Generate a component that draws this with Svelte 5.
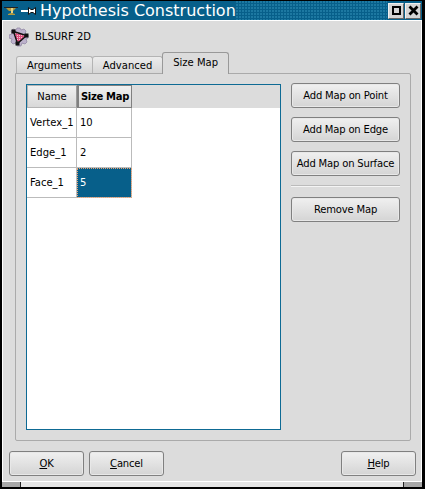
<script>
  const tabs = ['Arguments', 'Advanced', 'Size Map'];
  const rows = [
    { name: 'Vertex_1', size: '10' },
    { name: 'Edge_1', size: '2' },
    { name: 'Face_1', size: '5', current: true }
  ];
  const actions = ['Add Map on Point', 'Add Map on Edge', 'Add Map on Surface'];
</script>

<div class="window">
  <div class="titlebar">
    <div class="wm-left">
      <svg width="15" height="10" viewBox="0 0 15 10">
        <path d="M0 1h14v1H0z" fill="#222" />
        <path d="M2 2h10L9 5H8v2l3 1v1H4V8l3-1V5H5z" fill="#b59a3c" />
        <path d="M7 2h2v5H7z" fill="#e8d488" />
      </svg>
      <svg width="16" height="10" viewBox="0 0 16 10">
        <path d="M0 5h7" stroke="#fff" stroke-width="2" />
        <path d="M7.500 1.500v7l2.500-2h2l2.500 2v-7l-2.500 2h-2z" fill="#fff" stroke="#111" />
      </svg>
    </div>
    <div class="title">Hypothesis Construction</div>
    <div class="grip"></div>
    <div class="wm-btn"><span class="maxi"></span></div>
    <div class="wm-btn">
      <svg width="11" height="11" viewBox="0 0 11 11">
        <path d="M1.500 1.500l8 8M9.500 1.500l-8 8" stroke="#000" stroke-width="2.800" />
      </svg>
    </div>
  </div>

  <div class="body">
    <div class="hypo">
      <svg width="20" height="20" viewBox="0 0 20 20">
        <defs>
          <pattern id="hatch" width="2" height="2" patternUnits="userSpaceOnUse">
            <rect width="2" height="2" fill="#e0507f" />
            <rect width="1" height="1" fill="#f4c0d0" />
          </pattern>
        </defs>
        <path d="M8 1h3l1 2 3-1 2 2-1 3 3 1v3l-2 1 1 3-2 2-3-1-1 3H8l-1-3-3 1-2-2 1-3-3-1V8l3-1-1-3 2-2 3 1z" fill="#bdb2cc" stroke="#8d82a0" stroke-width=".7" />
        <path d="M4.500 4.500l13 4-9 8z" fill="url(#hatch)" stroke="#111" stroke-width="1.400" />
        <rect x="2.500" y="2.500" width="4" height="4" fill="#111" />
        <rect x="15.500" y="6.500" width="4" height="4" fill="#111" />
        <rect x="6.500" y="14.500" width="4" height="4" fill="#111" />
      </svg>
      <span>BLSURF 2D</span>
    </div>

    <div class="tabbar">
      {#each tabs as tab, i}
        <div class="tab" class:active={i === 2}>{tab}</div>
      {/each}
    </div>

    <div class="pane">
      <div class="table">
        <div class="head">
          <div class="hcell name">Name</div>
          <div class="hcell size cur">Size Map</div>
        </div>
        {#each rows as row}
          <div class="row">
            <div class="cell name">{row.name}</div>
            <div class="cell size" class:selected={row.current}>{row.size}</div>
          </div>
        {/each}
      </div>

      <div class="side">
        {#each actions as action}
          <button>{action}</button>
        {/each}
        <div class="sep"></div>
        <button>Remove Map</button>
      </div>
    </div>

    <div class="footer">
      <button class="wide"><u>O</u>K</button>
      <button class="wide"><u>C</u>ancel</button>
      <div class="spacer"></div>
      <button class="wide"><u>H</u>elp</button>
    </div>
  </div>

  <div class="resize">
    <div class="corner"></div>
    <div class="mid"></div>
    <div class="corner"></div>
  </div>
</div>

<style>
  :global(body) {
    background: #000;
  }

  .window {
    width: 425px;
    height: 489px;
    box-sizing: border-box;
    display: flex;
    flex-direction: column;
    background: #dcdcdc;
    border: solid #000;
    border-width: 1px 3px 2px 2px;
    font-family: "DejaVu Sans", sans-serif;
    font-size: 10px;
    color: #000;
    overflow: hidden;
  }

  .titlebar {
    height: 19px;
    flex: none;
    display: flex;
    align-items: center;
    background-color: #075f8a;
  }

  .wm-left {
    width: 38px;
    flex: none;
    padding-left: 2px;
    box-sizing: border-box;
    display: flex;
    align-items: center;
    gap: 2px;
  }

  .title {
    color: #fff;
    font-size: 16px;
    line-height: 19px;
    white-space: nowrap;
  }

  .grip {
    flex: 1;
    align-self: stretch;
    background-image: radial-gradient(circle at 1px 1px, #1f7aa3 .7px, transparent .8px);
    background-size: 3px 3px;
  }

  .wm-btn {
    width: 16px;
    height: 16px;
    margin-left: 1px;
    background: #d4d4d4;
    border: 1px solid;
    border-color: #f0f0f0 #666 #666 #f0f0f0;
    box-sizing: border-box;
    display: flex;
    align-items: center;
    justify-content: center;
  }

  .wm-btn:last-child {
    margin-right: 1px;
  }

  .maxi {
    width: 5px;
    height: 5px;
    border: 2px solid #000;
  }

  .body {
    flex: 1;
    display: flex;
    flex-direction: column;
    border-top: 1px solid #fff;
    border-left: 1px solid #fff;
    border-right: 1px solid #fff;
    min-height: 0;
  }

  .hypo {
    height: 31px;
    flex: none;
    display: flex;
    align-items: center;
    gap: 6px;
    padding-left: 6px;
    box-sizing: border-box;
  }

  .tabbar {
    display: flex;
    align-items: flex-end;
    height: 21px;
    flex: none;
    padding-left: 13px;
  }

  .tab {
    height: 17px;
    padding: 0 10px;
    display: flex;
    align-items: center;
    background: linear-gradient(#ececec, #d6d6d6);
    border: 1px solid #b4b4b4;
    border-bottom: none;
    margin-right: -1px;
    box-sizing: border-box;
    border-radius: 3px 3px 0 0;
  }

  .tab.active {
    height: 22px;
    padding-bottom: 3px;
    background: #dcdcdc;
    border-color: #999;
    position: relative;
    top: 1px;
    margin-right: 0;
  }

  .pane {
    flex: 1;
    display: flex;
    gap: 10px;
    margin: 0 10px 0 12px;
    padding: 10px;
    border: 1px solid #aaa;
    border-radius: 0 2px 2px 2px;
    min-height: 0;
  }

  .table {
    width: 255px;
    box-sizing: border-box;
    background: #fff;
    border: 1px solid #0e6a94;
    flex: none;
  }

  .head {
    display: flex;
    height: 23px;
    background: #dcdcdc;
  }

  .hcell {
    box-sizing: border-box;
    display: flex;
    align-items: center;
    justify-content: center;
    white-space: nowrap;
    background: linear-gradient(#f0f0f0, #d8d8d8);
    border: 1px solid #b4b4b4;
    border-right-color: #9a9a9a;
  }

  .hcell.cur {
    font-weight: 700;
    letter-spacing: -.3px;
    border-color: #808080;
    border-left-width: 2px;
  }

  .row {
    display: flex;
    height: 30px;
  }

  .cell {
    box-sizing: border-box;
    display: flex;
    align-items: center;
    padding-left: 3px;
    border-right: 1px solid #bbb;
    border-bottom: 1px solid #bbb;
    white-space: nowrap;
  }

  .name {
    width: 50px;
  }

  .size {
    width: 55px;
  }

  .selected {
    background: #075f8a;
    color: #fff;
    outline: 1px dotted #e9a070;
    outline-offset: -1px;
  }

  .side {
    flex: 1;
    display: flex;
    flex-direction: column;
    gap: 9px;
    margin-top: -1px;
  }

  button {
    height: 25px;
    flex: none;
    padding: 0;
    box-sizing: border-box;
    font: inherit;
    letter-spacing: -.17px;
    color: #000;
    background: linear-gradient(#f0f0f0, #d4d4d4);
    border: 1px solid #808080;
    border-radius: 3px;
    box-shadow: inset 0 0 0 1px #e8e8e8;
    white-space: nowrap;
  }

  .sep {
    height: 2px;
    flex: none;
    background: #f4f4f4;
    border-top: 1px solid #bbb;
    box-sizing: border-box;
    margin-bottom: 1px;
  }

  .footer {
    height: 40px;
    flex: none;
    display: flex;
    align-items: flex-start;
    gap: 5px;
    padding: 10px 5px 0 6px;
    box-sizing: border-box;
  }

  .wide {
    width: 75px;
  }

  .spacer {
    flex: 1;
  }

  .resize {
    height: 6px;
    flex: none;
    display: flex;
    border-top: 1px solid #fff;
    box-sizing: border-box;
    background: #dcdcdc;
  }

  .corner {
    width: 18px;
    background: #a8a8a8;
  }

  .mid {
    flex: 1;
    border-left: 1px solid #222;
    border-right: 1px solid #222;
    background: #e4e4e4;
  }
</style>
